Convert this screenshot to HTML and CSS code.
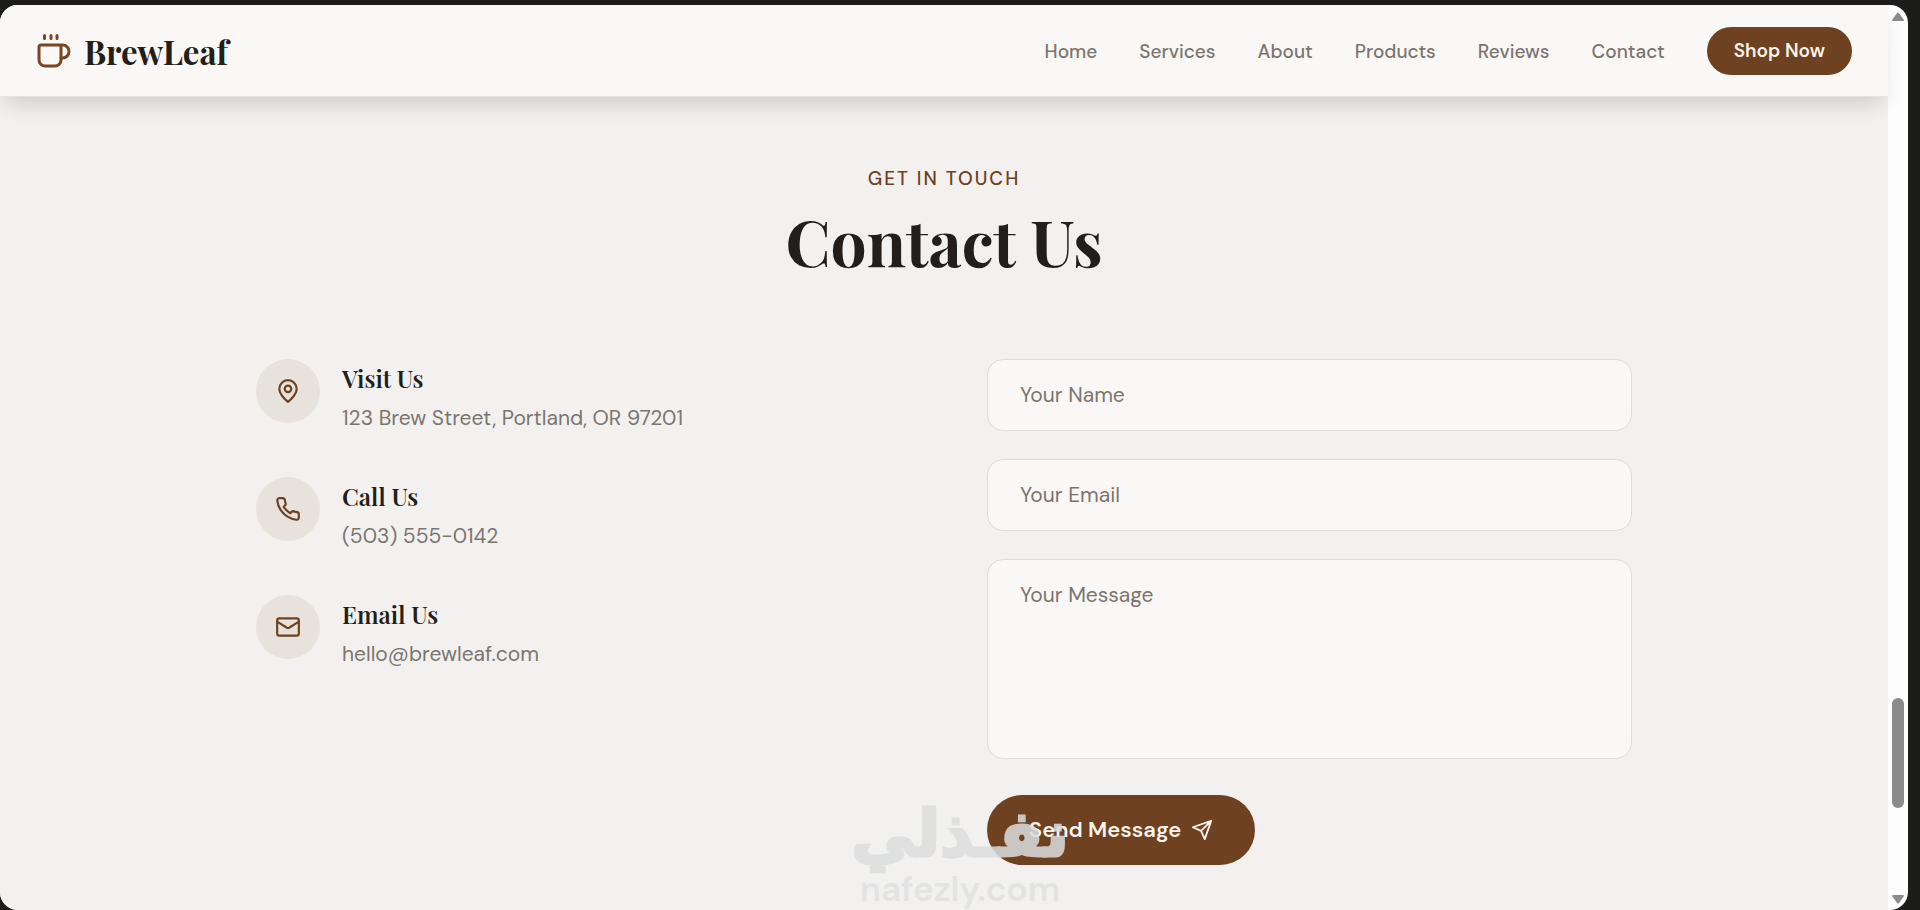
FILE: index.html
```html
<!DOCTYPE html>
<html lang="en">
<head>
<meta charset="utf-8">
<meta name="viewport" content="width=device-width, initial-scale=1">
<title>BrewLeaf – Contact Us</title>
<link rel="stylesheet" href="styles.css">
</head>
<body>
<div class="window">
  <div class="page">
    <header class="header">
      <a class="brand" href="#home">
        <svg class="brand-icon" viewBox="0 0 36 36" fill="none" stroke="currentColor" stroke-width="3" stroke-linecap="round" stroke-linejoin="round" aria-hidden="true">
          <path d="M8.500 2.500v3M15 2.500v3M21 2.500v3"/>
          <path d="M5 12h18a2 2 0 0 1 2 2v13a6 6 0 0 1-6 6h-10a6 6 0 0 1-6-6V14a2 2 0 0 1 2-2z"/>
          <path d="M25 12h1.500a6.500 6.500 0 0 1 0 13h-1.500"/>
        </svg>
        <span>BrewLeaf</span>
      </a>
      <nav class="nav" aria-label="Main">
        <a href="#home">Home</a>
        <a href="#services">Services</a>
        <a href="#about">About</a>
        <a href="#products">Products</a>
        <a href="#reviews">Reviews</a>
        <a href="#contact">Contact</a>
        <a class="shop" href="#shop">Shop Now</a>
      </nav>
    </header>

    <main class="contact" id="contact">
      <p class="eyebrow">GET IN TOUCH</p>
      <h1 class="title">Contact Us</h1>
      <div class="columns">
        <div class="details">
          <section class="detail">
            <span class="badge"><svg class="icon" viewBox="0 0 24 24" aria-hidden="true"><path d="M20 10c0 6-8 12-8 12s-8-6-8-12a8 8 0 0 1 16 0z"/><circle cx="12" cy="10" r="3"/></svg></span>
            <div><h2>Visit Us</h2><p>123 Brew Street, Portland, OR 97201</p></div>
          </section>
          <section class="detail">
            <span class="badge"><svg class="icon" viewBox="0 0 24 24" aria-hidden="true"><path d="M22 16.920v3a2 2 0 0 1-2.180 2 19.790 19.790 0 0 1-8.630-3.070 19.500 19.500 0 0 1-6-6 19.790 19.790 0 0 1-3.070-8.670A2 2 0 0 1 4.110 2h3a2 2 0 0 1 2 1.720 12.840 12.840 0 0 0 .7 2.810 2 2 0 0 1-.45 2.110L8.090 9.910a16 16 0 0 0 6 6l1.270-1.270a2 2 0 0 1 2.110-.45 12.840 12.840 0 0 0 2.810.7A2 2 0 0 1 22 16.920z"/></svg></span>
            <div><h2>Call Us</h2><p>(503) 555-0142</p></div>
          </section>
          <section class="detail">
            <span class="badge"><svg class="icon" viewBox="0 0 24 24" aria-hidden="true"><rect x="2" y="4" width="20" height="16" rx="2"/><path d="m2 7 9 5.700a2 2 0 0 0 2 0L22 7"/></svg></span>
            <div><h2>Email Us</h2><p>hello@brewleaf.com</p></div>
          </section>
        </div>
        <form class="form">
          <input class="field" type="text" placeholder="Your Name" aria-label="Your Name">
          <input class="field" type="email" placeholder="Your Email" aria-label="Your Email">
          <textarea class="field message" placeholder="Your Message" aria-label="Your Message"></textarea>
          <button class="send" type="button">Send Message
            <svg class="send-icon" viewBox="0 0 24 24" aria-hidden="true"><path d="M22 2 15 22l-4-9-9-4zM22 2 11 13"/></svg>
          </button>
        </form>
      </div>
    </main>
  </div>
  <div class="scrollbar" aria-hidden="true">
    <svg class="arrow" viewBox="0 0 12 9"><path d="M5 1q1-1 2 0l5 7q0 1-1 1H1Q0 9 0 8z"/></svg>
    <div class="track"><div class="thumb"></div></div>
    <svg class="arrow" viewBox="0 0 12 9"><path d="M5 8q1 1 2 0l5-7q0-1-1-1H1Q0 0 0 1z"/></svg>
  </div>
</div>
<div class="watermark">
  <span class="watermark-ar" lang="ar" dir="rtl">نفـذلي</span>
  <span class="watermark-en">nafezly.com</span>
</div>
</body>
</html>
```

FILE: styles.css
```css
:root {
  --brown: #6e4120;
  --ink: #231e19;
  --muted: #7b756f;
  --paper: #faf8f6;
  --sand: #f3f1ef;
  --sans: "DM Sans", Inter, "Liberation Sans", sans-serif;
  --serif: "Playfair Display", "Liberation Serif", serif;
}

* { box-sizing: border-box; }

body {
  margin: 0;
  padding: 5px 12px 0 0;
  min-height: 100vh;
  display: flex;
  background: #1c1c1b;
  color: var(--ink);
  font-family: var(--sans);
}

h1, h2, p { margin: 0; }
a { color: inherit; text-decoration: none; }

.window {
  flex: 1;
  display: flex;
  border-radius: 18px;
  overflow: hidden;
  background: #fdfdfd;
}

.page {
  flex: 1;
  background: var(--sand);
}

.header {
  display: flex;
  align-items: center;
  justify-content: space-between;
  padding: 22px 36px 21px;
  background: var(--paper);
  border-bottom: 1px solid #e5e3e1;
  box-shadow: 0 12px 20px -6px rgba(0, 0, 0, 0.16);
}

.brand {
  display: flex;
  align-items: center;
  gap: 12px;
  font: bold 33px/48px var(--serif);
}

.brand-icon { width: 36px; height: 36px; color: #7a4520; }

.nav {
  display: flex;
  align-items: center;
  gap: 42px;
  color: var(--muted);
  font-size: 19px;
  font-weight: 500;
}

.shop {
  padding: 0 27px;
  border-radius: 24px;
  background: var(--brown);
  color: #faf3ea;
  font-weight: 600;
  line-height: 48px;
}

.contact {
  max-width: 1376px;
  margin: 0 auto;
  padding: 68px 0 44px;
}

.eyebrow {
  color: var(--brown);
  font-size: 19px;
  font-weight: 500;
  letter-spacing: 2px;
  line-height: 28px;
  text-align: center;
}

.title {
  margin: 2px 0 72px;
  font: bold 64px/92px var(--serif);
  text-align: center;
}

.columns {
  display: grid;
  grid-template-columns: 1fr 1fr;
  gap: 86px;
}

.details {
  display: flex;
  flex-direction: column;
  gap: 38px;
}

.detail { display: flex; gap: 22px; }
.detail h2 { font: 600 24px/38px var(--serif); }
.detail p { color: var(--muted); font-size: 21px; line-height: 42px; }

.badge {
  display: grid;
  place-items: center;
  width: 64px;
  height: 64px;
  border-radius: 50%;
  background: #e8e2dc;
}

.icon, .send-icon {
  width: 26px;
  height: 26px;
  fill: none;
  stroke: var(--brown);
  stroke-width: 2;
  stroke-linecap: round;
  stroke-linejoin: round;
}

.form {
  display: flex;
  flex-direction: column;
  gap: 28px;
}

.field {
  width: 100%;
  height: 72px;
  padding: 0 32px;
  border: 1px solid #dedcd9;
  border-radius: 16px;
  background: var(--paper);
  color: var(--ink);
  font: 21px/28px var(--sans);
}

.field::placeholder { color: var(--muted); opacity: 1; }

.message {
  display: block;
  height: 200px;
  padding-top: 21px;
  resize: none;
}

.send {
  display: flex;
  align-items: center;
  align-self: flex-start;
  gap: 10px;
  margin-top: 8px;
  padding: 0 42px;
  border: 0;
  border-radius: 35px;
  background: var(--brown);
  color: #faf3ea;
  font: 600 22px/70px var(--sans);
}

.send-icon { width: 22px; height: 22px; stroke: #faf3ea; }

.scrollbar {
  display: flex;
  flex-direction: column;
  align-items: center;
  width: 20px;
  padding: 7px 0 6px;
}

.arrow { width: 12px; height: 9px; fill: #8b8b8b; }

.track {
  flex: 1;
  display: grid;
  grid-template-rows: 676fr 110fr 87fr;
}

.thumb {
  grid-row: 2;
  width: 12px;
  border-radius: 6px;
  background: #8b8b8b;
}

.watermark {
  position: absolute;
  left: 50%;
  bottom: 0;
  display: flex;
  flex-direction: column;
  align-items: center;
  transform: translateX(-50%);
  color: #dcdede;
  opacity: 0.85;
  pointer-events: none;
}

.watermark-ar {
  font: bold 64px/68px "DejaVu Sans", sans-serif;
  -webkit-text-stroke: 3px #dcdede;
  stroke-linejoin: round;
}

.watermark-en { color: #e0e2e2; font: 600 35px/42px var(--sans); }
```
